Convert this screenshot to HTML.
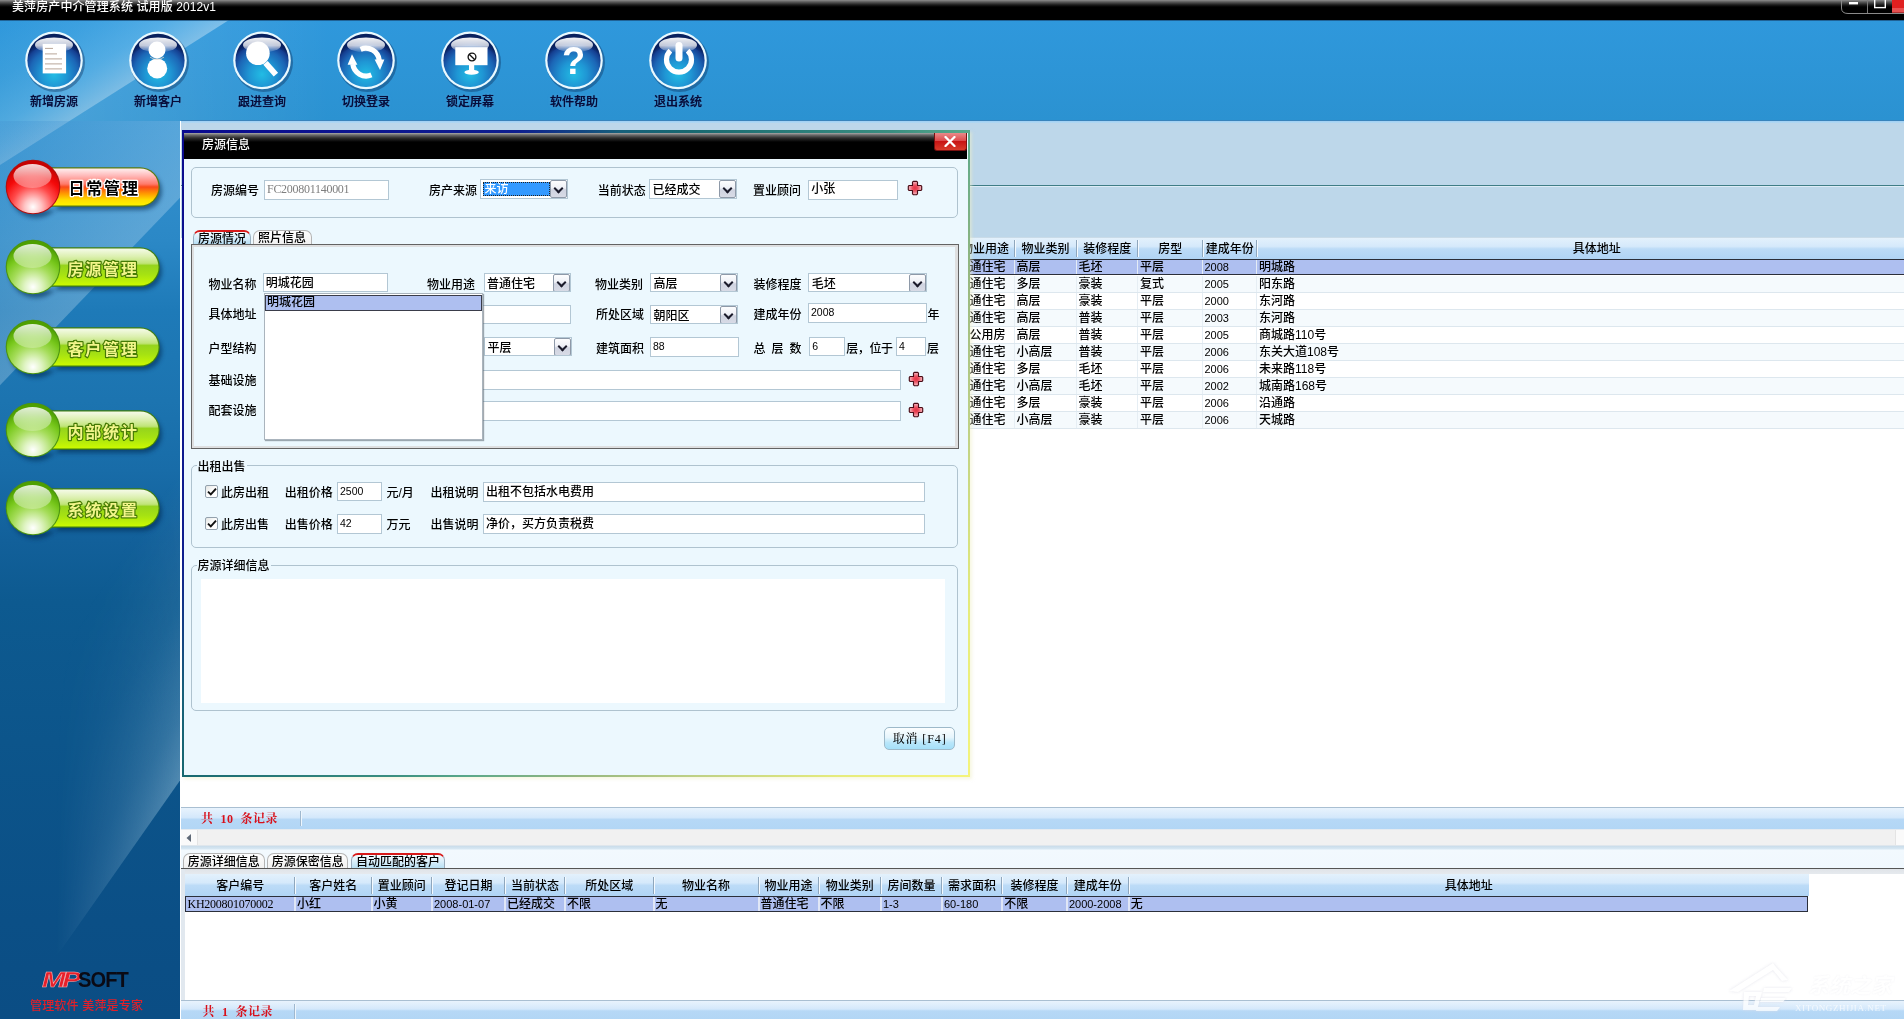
<!DOCTYPE html>
<html lang="zh-CN">
<head>
<meta charset="utf-8">
<title>美萍房产中介管理系统</title>
<style>
*{box-sizing:border-box;margin:0;padding:0}
html,body{width:1904px;height:1019px;overflow:hidden;background:#fff}
body{will-change:transform;transform:translateZ(0);position:relative;font-family:"Liberation Sans","Noto Sans CJK SC",sans-serif;font-size:12px;line-height:14px;color:#000;font-weight:500}
.abs{position:absolute}
.t{position:absolute;white-space:nowrap;height:14px;line-height:14px}
.ser{font-family:"Liberation Serif","Noto Serif CJK SC",serif}
.mono{font-family:"Liberation Mono","Noto Sans CJK SC",monospace}
/* title bar */
#titlebar{position:absolute;left:0;top:0;width:1904px;height:20px;background:linear-gradient(#8e8e8e 0,#5a5a5a 2px,#1a1a1a 5px,#000 7px,#000 100%)}
#toolbar{position:absolute;left:0;top:20px;width:1904px;height:101px;background:#2d95d6}
#sidebar{overflow:hidden;position:absolute;left:0;top:121px;width:180.4px;height:898px;background:linear-gradient(#3593d2 0,#2b88c6 120px,#1e7ab8 190px,#1c74b0 280px,#186ca8 350px,#12609a 420px,#0d5a90 480px,#0c558b 620px,#0b4f86 800px,#0b4d84 100%)}
#main{position:absolute;left:181px;top:121px;width:1723px;height:898px;background:#fff}
.tbl{position:absolute;white-space:nowrap;color:#060c3a;font-weight:500;font-size:12px;line-height:14px;height:14px;width:104px;text-align:center;text-shadow:0 0 1px rgba(6,12,58,.85),0 0 3px rgba(130,205,255,.55)}
/* inputs */
.inp{position:absolute;background:#fff;border:1px solid #b3c7d4;height:20px;font-size:10.5px;line-height:14px;padding:1px 0 0 2px;white-space:nowrap;overflow:hidden}
.cmb{position:absolute;background:#fff;border:1px solid #b3c7d4;height:20px;font-size:12px;line-height:16px;padding:2px 0 0 2.5px;white-space:nowrap;overflow:hidden}
.cmb i{position:absolute;right:0;top:0;width:17px;height:18px;border:1px solid #8e99a8;border-radius:2px;background:linear-gradient(#fdfdfe 0,#eef0f6 45%,#cfd3e0 55%,#d8dbe6 100%)}
.cmb i:after{content:"";position:absolute;left:4px;top:4px;width:5px;height:5px;border-right:2px solid #1a1a2a;border-bottom:2px solid #1a1a2a;transform:rotate(45deg) scale(1,1)}
.grp{position:absolute;border:1px solid #afc3cf;border-radius:5px}
.leg{position:absolute;background:#ecf8fe;padding:0 1px;white-space:nowrap;height:14px;line-height:14px}
.hd{position:absolute;top:0;height:22px;line-height:22px;text-align:center;white-space:nowrap;overflow:hidden}
.sep{position:absolute;top:3px;width:2px;height:17px;border-left:1px solid #8fa7bd;border-right:1px solid #f4faff}
.cell{position:absolute;top:0;height:17px;line-height:16px;white-space:nowrap;overflow:hidden;padding-left:2px}
.num{font-size:11px}
</style>
</head>
<body>
<div id="titlebar">
<div class="t" style="left:12px;top:0px;color:#fff;font-size:12px;letter-spacing:0.1px">美萍房产中介管理系统 试用版 2012v1</div>
<svg class="abs" style="left:1836px;top:0" width="68" height="20" viewBox="0 0 68 20">
<path d="M5.5 0V8Q5.5 13.5 12 13.5H68" fill="none" stroke="#8a8a8a" stroke-width="1"/>
<path d="M31.5 0V13" stroke="#7a7a7a" stroke-width="1"/>
<rect x="13" y="2" width="9" height="2.4" fill="#fff"/>
<rect x="38.7" y="-2" width="10.6" height="9.6" fill="none" stroke="#fff" stroke-width="1.4"/>
<rect x="56" y="0" width="12" height="12.5" fill="#e02020"/>
<rect x="56" y="8" width="12" height="4.5" fill="#e85050"/>
</svg>
</div>
<div id="toolbar">
<svg class="abs" style="left:0;top:0" width="1904" height="101" viewBox="0 20 1904 101">
<defs>
<linearGradient id="swA" gradientUnits="userSpaceOnUse" x1="150" y1="70" x2="60" y2="-70">
<stop offset="0" stop-color="#fff" stop-opacity=".38"/><stop offset=".2" stop-color="#a8e0ff" stop-opacity=".3"/><stop offset=".45" stop-color="#9cdcff" stop-opacity=".13"/><stop offset=".7" stop-color="#9cdcff" stop-opacity=".02"/><stop offset="1" stop-color="#9cdcff" stop-opacity="0"/>
</linearGradient>
<linearGradient id="tbh" gradientUnits="userSpaceOnUse" x1="0" y1="0" x2="330" y2="0"><stop offset="0" stop-color="#fff" stop-opacity=".17"/><stop offset="1" stop-color="#fff" stop-opacity="0"/></linearGradient>
<linearGradient id="tbv" x1="0" y1="0" x2="0" y2="1"><stop offset="0" stop-color="#2f98dc"/><stop offset="1" stop-color="#2b92d1"/></linearGradient>
<radialGradient id="ball" gradientUnits="userSpaceOnUse" cx="0" cy="14" r="34">
<stop offset="0" stop-color="#22bce4"/><stop offset=".38" stop-color="#1f96d4"/><stop offset=".72" stop-color="#1c66b6"/><stop offset=".9" stop-color="#154092"/><stop offset="1" stop-color="#08205e"/>
</radialGradient>
<linearGradient id="gloss" x1="0" y1="0" x2="0" y2="1"><stop offset="0" stop-color="#fff" stop-opacity=".95"/><stop offset=".55" stop-color="#fff" stop-opacity=".75"/><stop offset="1" stop-color="#fff" stop-opacity=".05"/></linearGradient>
<g id="sphere">
<circle cx="1.5" cy="2" r="29.5" fill="#06204a" opacity=".35"/>
<circle cx="0" cy="0" r="28.8" fill="#e9f9ff"/>
<circle cx="0" cy="0" r="26.6" fill="url(#ball)"/>
<path d="M-21 -10 A24 24 0 0 1 21 -10 Q0 -22 -21 -10Z" fill="#061a5c" opacity=".3"/>
<ellipse cx="0" cy="-15.5" rx="19" ry="7.5" fill="url(#gloss)"/>
</g>
</defs>
<rect x="0" y="20" width="1904" height="101" fill="url(#tbv)"/>
<polygon points="229,20 330,20 330,121 69.5,121" fill="url(#tbh)"/>
<polygon points="0,20 229,20 69.5,121 0,121" fill="url(#swA)"/>
<rect x="0" y="20" width="1904" height="1" fill="#1a4c78" opacity=".7"/>
<rect x="181" y="120" width="1723" height="1" fill="#3f7fb4" opacity=".75"/>
<!-- icon 1: document -->
<g transform="translate(54,60.4)"><use href="#sphere"/>
<rect x="-11.3" y="-16.5" width="23.4" height="29.5" fill="#fff"/>
<path d="M-9 -12h8M-9 -6.5h12M-9 -1.5h17M-9 3.5h17M-9 8.5h17" stroke="#b9a79a" stroke-width="1"/>
</g>
<!-- icon 2: person -->
<g transform="translate(158,60.4)"><use href="#sphere"/>
<circle cx="-1" cy="-10.4" r="8.5" fill="#fff"/><circle cx="-0.8" cy="8" r="10" fill="#fff"/>
<path d="M-8 -3.2Q-1 1.2 6 -3.2" fill="none" stroke="#d8cfc8" stroke-width=".8"/>
</g>
<!-- icon 3: magnifier -->
<g transform="translate(262,60.4)"><use href="#sphere"/>
<path d="M3.5 2.4L13.9 14.2" stroke="#fff" stroke-width="5.8"/>
<circle cx="-4.1" cy="-7.1" r="11.8" fill="#fff"/>
</g>
<!-- icon 4: refresh -->
<g transform="translate(366,60.4)"><use href="#sphere"/><g transform="translate(0,1.3)">
<path d="M-5.4 -12.4A13.5 13.5 0 0 1 13.2 -1.5" fill="none" stroke="#fff" stroke-width="5.2"/>
<path d="M8.6 -2.2L18.4 -2.2L14 8.2Z" fill="#fff"/>
<path d="M5.4 13.2A13.5 13.5 0 0 1 -13.2 2.5" fill="none" stroke="#fff" stroke-width="5.2"/>
<path d="M-8.6 3L-18.4 3L-14 -7.4Z" fill="#fff"/>
</g></g>
<!-- icon 5: monitor -->
<g transform="translate(470,60.4)"><use href="#sphere"/>
<rect x="-14.7" y="-13.2" width="32.2" height="18" fill="#fff"/>
<rect x="-1" y="4" width="5.2" height="7" fill="#fff"/>
<ellipse cx="1.6" cy="11.8" rx="7.2" ry="2.5" fill="#fff"/>
<circle cx="2" cy="-3.4" r="3.9" fill="none" stroke="#111" stroke-width="1.3"/>
<path d="M-0.8 -6.2L4.8 -0.6" stroke="#111" stroke-width="1.3"/>
</g>
<!-- icon 6: help -->
<g transform="translate(574,60.4)"><use href="#sphere"/>
<text x="-0.5" y="13.6" text-anchor="middle" font-family="Liberation Sans, sans-serif" font-weight="bold" font-size="38" fill="#fff">?</text>
</g>
<!-- icon 7: power -->
<g transform="translate(678,60.4)"><use href="#sphere"/>
<path d="M-7.6 -9.8A12.5 12.5 0 1 0 9.6 -9.8" fill="none" stroke="#fff" stroke-width="5.2"/>
<path d="M1 -15V-2.5" stroke="#fff" stroke-width="7" stroke-linecap="round"/>
</g>
</svg>
<div class="tbl" style="left:2px;top:75px">新增房源</div>
<div class="tbl" style="left:106px;top:75px">新增客户</div>
<div class="tbl" style="left:210px;top:75px">跟进查询</div>
<div class="tbl" style="left:314px;top:75px">切换登录</div>
<div class="tbl" style="left:418px;top:75px">锁定屏幕</div>
<div class="tbl" style="left:522px;top:75px">软件帮助</div>
<div class="tbl" style="left:626px;top:75px">退出系统</div>
</div>
<div id="sidebar">
<svg class="abs" style="left:0;top:0" width="181" height="898" viewBox="0 121 181 898">
<defs>
<linearGradient id="sdB" gradientUnits="userSpaceOnUse" x1="95" y1="286" x2="-28" y2="169"><stop offset="0" stop-color="#e4f4ff" stop-opacity=".26"/><stop offset="1" stop-color="#e4f4ff" stop-opacity=".05"/></linearGradient>
<linearGradient id="sdA" gradientUnits="userSpaceOnUse" x1="150" y1="70" x2="60" y2="-70"><stop offset="0" stop-color="#fff" stop-opacity=".2"/><stop offset=".2" stop-color="#a8e0ff" stop-opacity=".14"/><stop offset=".45" stop-color="#9cdcff" stop-opacity=".07"/><stop offset=".7" stop-color="#9cdcff" stop-opacity=".02"/><stop offset="1" stop-color="#9cdcff" stop-opacity="0"/></linearGradient>
<linearGradient id="sdC" gradientUnits="userSpaceOnUse" x1="181" y1="779" x2="34" y2="676"><stop offset="0" stop-color="#d8f4ff" stop-opacity=".34"/><stop offset=".2" stop-color="#d8f4ff" stop-opacity=".22"/><stop offset=".55" stop-color="#d8f4ff" stop-opacity=".09"/><stop offset="1" stop-color="#d8f4ff" stop-opacity="0"/></linearGradient>
<linearGradient id="sdCm" gradientUnits="userSpaceOnUse" x1="181" y1="0" x2="55" y2="0"><stop offset="0" stop-color="#fff"/><stop offset=".5" stop-color="#777"/><stop offset="1" stop-color="#000"/></linearGradient>
<mask id="mC" maskUnits="userSpaceOnUse" x="0" y="121" width="181" height="898"><rect x="0" y="121" width="181" height="898" fill="url(#sdCm)"/></mask>
<linearGradient id="pillR" x1="0" y1="0" x2="0" y2="1"><stop offset="0" stop-color="#fff0f0"/><stop offset=".2" stop-color="#ffb8b8"/><stop offset=".42" stop-color="#ff7a6a"/><stop offset=".5" stop-color="#fa4a1a"/><stop offset=".68" stop-color="#ff9a00"/><stop offset=".85" stop-color="#ffdf00"/><stop offset="1" stop-color="#fff200"/></linearGradient>
<linearGradient id="pillG" x1="0" y1="0" x2="0" y2="1"><stop offset="0" stop-color="#f6fbea"/><stop offset=".22" stop-color="#dcf0b0"/><stop offset=".4" stop-color="#c0e478"/><stop offset=".46" stop-color="#96d41c"/><stop offset=".7" stop-color="#a6e212"/><stop offset="1" stop-color="#ccfa00"/></linearGradient>
<radialGradient id="ballR" gradientUnits="userSpaceOnUse" cx="0" cy="20" r="42"><stop offset="0" stop-color="#fff"/><stop offset=".2" stop-color="#ffc4c4"/><stop offset=".5" stop-color="#ff4a4a"/><stop offset=".75" stop-color="#f40a0a"/><stop offset="1" stop-color="#c80000"/></radialGradient>
<radialGradient id="ballG" gradientUnits="userSpaceOnUse" cx="0" cy="20" r="42"><stop offset="0" stop-color="#fff"/><stop offset=".2" stop-color="#e0f4c4"/><stop offset=".5" stop-color="#a4dc58"/><stop offset=".75" stop-color="#78c81c"/><stop offset="1" stop-color="#4ea000"/></radialGradient>
<linearGradient id="bgloss" x1="0" y1="0" x2="0" y2="1"><stop offset="0" stop-color="#fff" stop-opacity=".85"/><stop offset="1" stop-color="#fff" stop-opacity=".25"/></linearGradient>
<filter id="bsh" x="-20%" y="-30%" width="150%" height="180%"><feGaussianBlur stdDeviation="2"/></filter>
<g id="btnG">
<path d="M0 -19H107A19 19 0 0 1 107 19H0Z M0 -27A27 27 0 1 0 0 27A27 27 0 1 0 0 -27Z" transform="translate(3,4)" fill="#052850" opacity=".55" filter="url(#bsh)"/>
<path d="M0 -19.8H107A19.8 19.8 0 0 1 107 19.8H0Z" fill="#3f7f10"/>
<path d="M0 -18.6H107A18.6 18.6 0 0 1 107 18.6H0Z" fill="url(#pillG)"/>
<circle r="27.3" fill="#4c9410"/><circle r="26.2" fill="url(#ballG)"/>
<ellipse cx="-0.5" cy="-11" rx="19" ry="12" fill="url(#bgloss)"/>
</g>
<g id="btnR">
<path d="M0 -19H107A19 19 0 0 1 107 19H0Z M0 -27A27 27 0 1 0 0 27A27 27 0 1 0 0 -27Z" transform="translate(3,4)" fill="#052850" opacity=".55" filter="url(#bsh)"/>
<path d="M0 -19.8H107A19.8 19.8 0 0 1 107 19.8H0Z" fill="#5a7a10"/>
<path d="M0 -18.6H107A18.6 18.6 0 0 1 107 18.6H0Z" fill="url(#pillR)"/>
<circle r="27.3" fill="#b01010"/><circle r="26.2" fill="url(#ballR)"/>
<ellipse cx="-0.5" cy="-11" rx="19" ry="12" fill="url(#bgloss)"/>
</g>
</defs>
<polygon points="0,121 181,121 181,196.7 0,385.3" fill="url(#sdB)"/>
<polygon points="0,121 69.5,121 0,165" fill="url(#sdA)"/>
<polygon points="181,480 181,779 40,980 0,980 0,480" fill="url(#sdC)" mask="url(#mC)"/>
<use href="#btnR" x="33" y="187"/>
<use href="#btnG" x="33" y="267"/>
<use href="#btnG" x="33" y="347"/>
<use href="#btnG" x="33" y="430"/>
<use href="#btnG" x="33" y="508"/>
<g font-family="Liberation Sans, Noto Sans CJK SC, sans-serif" font-weight="bold" font-size="16" letter-spacing="1.8" stroke-linejoin="round" paint-order="stroke">
<text x="68.5" y="194" fill="#000" stroke="#fff" stroke-width="2.6">日常管理</text>
<text x="67.5" y="274.5" fill="#f2f58a" stroke="#457a04" stroke-width="2.4">房源管理</text>
<text x="67.5" y="354.5" fill="#f2f58a" stroke="#457a04" stroke-width="2.4">客户管理</text>
<text x="67.5" y="437.5" fill="#f2f58a" stroke="#457a04" stroke-width="2.4">内部统计</text>
<text x="67.5" y="515.5" fill="#f2f58a" stroke="#457a04" stroke-width="2.4">系统设置</text>
</g>
<!-- logo -->
<g font-family="Liberation Sans, sans-serif">
<text x="42" y="987" font-size="22" font-weight="bold" font-style="italic" fill="#e8202a" stroke="#ffb0b0" stroke-width=".5" letter-spacing="-2.5" textLength="36" lengthAdjust="spacingAndGlyphs">MP</text>
<text x="78" y="987" font-size="22" font-weight="bold" fill="#0a0a14" letter-spacing="-1" textLength="50" lengthAdjust="spacingAndGlyphs">SOFT</text>
</g>
<text x="30" y="1010" font-family="Liberation Sans, Noto Sans CJK SC, sans-serif" font-size="12" fill="#e0202a" textLength="113">管理软件 美萍是专家</text>
</svg>
</div>
<div id="main">
<div class="abs" style="left:0;top:0;width:1723px;height:117px;background:#bdd7ea"></div>
<div class="abs" style="left:0;top:0;width:1723px;height:2px;background:linear-gradient(#9fd0f4,#b4d8f2)"></div>
<div class="abs" style="left:0;top:64px;width:1723px;height:1px;background:#3f7d86"></div>
<div class="abs" style="left:0;top:65px;width:1723px;height:1px;background:#dcecf6"></div>
<div class="abs" style="left:774px;top:116px;width:949px;height:22px;background:linear-gradient(#e3f1fc 0,#d5e9fb 40%,#bcdbf7 52%,#b0d4f5 100%);border-top:1px solid #c9dbe8;overflow:hidden">
<div class="hd" style="left:1.0px;width:58.0px;top:0px">物业用途</div>
<div class="hd" style="left:60.0px;width:61.0px;top:0px">物业类别</div>
<div class="hd" style="left:122.0px;width:60.5px;top:0px">装修程度</div>
<div class="hd" style="left:183.5px;width:63.5px;top:0px">房型</div>
<div class="hd" style="left:248.0px;width:53.5px;top:0px">建成年份</div>
<div class="hd" style="left:302.5px;width:678.5px;top:0px">具体地址</div>
<div class="sep" style="left:58.5px;top:2px"></div>
<div class="sep" style="left:120.5px;top:2px"></div>
<div class="sep" style="left:182.0px;top:2px"></div>
<div class="sep" style="left:246.5px;top:2px"></div>
<div class="sep" style="left:301.0px;top:2px"></div>
</div>
<div class="abs" style="left:774px;top:137.50px;width:949px;background:#aebff0;border-top:1px solid #2b2f3a;border-bottom:1px solid #2b2f3a;height:16.5px;overflow:hidden">
<div class="cell" style="left:0.5px;width:58.0px;top:-1px">普通住宅</div>
<div class="cell" style="left:59.5px;width:61.0px;top:-1px">高层</div>
<div class="cell" style="left:121.5px;width:60.5px;top:-1px">毛坯</div>
<div class="cell" style="left:183.0px;width:63.5px;top:-1px">平层</div>
<div class="cell num" style="left:247.5px;width:53.5px;top:-1px">2008</div>
<div class="cell" style="left:302.0px;width:678.5px;top:-1px">明城路</div>
<div class="abs" style="left:58.5px;top:0;width:1px;height:17px;background:#e4ecf6"></div>
<div class="abs" style="left:120.5px;top:0;width:1px;height:17px;background:#e4ecf6"></div>
<div class="abs" style="left:182.0px;top:0;width:1px;height:17px;background:#e4ecf6"></div>
<div class="abs" style="left:246.5px;top:0;width:1px;height:17px;background:#e4ecf6"></div>
<div class="abs" style="left:301.0px;top:0;width:1px;height:17px;background:#e4ecf6"></div>
</div>
<div class="abs" style="left:774px;top:154.55px;width:949px;background:#f5fafd;border-bottom:1px solid #dde7ee;height:17.05px;overflow:hidden">
<div class="cell" style="left:0.5px;width:58.0px;top:0">普通住宅</div>
<div class="cell" style="left:59.5px;width:61.0px;top:0">多层</div>
<div class="cell" style="left:121.5px;width:60.5px;top:0">豪装</div>
<div class="cell" style="left:183.0px;width:63.5px;top:0">复式</div>
<div class="cell num" style="left:247.5px;width:53.5px;top:0">2005</div>
<div class="cell" style="left:302.0px;width:678.5px;top:0">阳东路</div>
<div class="abs" style="left:58.5px;top:0;width:1px;height:17px;background:#e6eef4"></div>
<div class="abs" style="left:120.5px;top:0;width:1px;height:17px;background:#e6eef4"></div>
<div class="abs" style="left:182.0px;top:0;width:1px;height:17px;background:#e6eef4"></div>
<div class="abs" style="left:246.5px;top:0;width:1px;height:17px;background:#e6eef4"></div>
<div class="abs" style="left:301.0px;top:0;width:1px;height:17px;background:#e6eef4"></div>
</div>
<div class="abs" style="left:774px;top:171.60px;width:949px;background:#ffffff;border-bottom:1px solid #dde7ee;height:17.05px;overflow:hidden">
<div class="cell" style="left:0.5px;width:58.0px;top:0">普通住宅</div>
<div class="cell" style="left:59.5px;width:61.0px;top:0">高层</div>
<div class="cell" style="left:121.5px;width:60.5px;top:0">豪装</div>
<div class="cell" style="left:183.0px;width:63.5px;top:0">平层</div>
<div class="cell num" style="left:247.5px;width:53.5px;top:0">2000</div>
<div class="cell" style="left:302.0px;width:678.5px;top:0">东河路</div>
<div class="abs" style="left:58.5px;top:0;width:1px;height:17px;background:#e6eef4"></div>
<div class="abs" style="left:120.5px;top:0;width:1px;height:17px;background:#e6eef4"></div>
<div class="abs" style="left:182.0px;top:0;width:1px;height:17px;background:#e6eef4"></div>
<div class="abs" style="left:246.5px;top:0;width:1px;height:17px;background:#e6eef4"></div>
<div class="abs" style="left:301.0px;top:0;width:1px;height:17px;background:#e6eef4"></div>
</div>
<div class="abs" style="left:774px;top:188.65px;width:949px;background:#f5fafd;border-bottom:1px solid #dde7ee;height:17.05px;overflow:hidden">
<div class="cell" style="left:0.5px;width:58.0px;top:0">普通住宅</div>
<div class="cell" style="left:59.5px;width:61.0px;top:0">高层</div>
<div class="cell" style="left:121.5px;width:60.5px;top:0">普装</div>
<div class="cell" style="left:183.0px;width:63.5px;top:0">平层</div>
<div class="cell num" style="left:247.5px;width:53.5px;top:0">2003</div>
<div class="cell" style="left:302.0px;width:678.5px;top:0">东河路</div>
<div class="abs" style="left:58.5px;top:0;width:1px;height:17px;background:#e6eef4"></div>
<div class="abs" style="left:120.5px;top:0;width:1px;height:17px;background:#e6eef4"></div>
<div class="abs" style="left:182.0px;top:0;width:1px;height:17px;background:#e6eef4"></div>
<div class="abs" style="left:246.5px;top:0;width:1px;height:17px;background:#e6eef4"></div>
<div class="abs" style="left:301.0px;top:0;width:1px;height:17px;background:#e6eef4"></div>
</div>
<div class="abs" style="left:774px;top:205.70px;width:949px;background:#ffffff;border-bottom:1px solid #dde7ee;height:17.05px;overflow:hidden">
<div class="cell" style="left:0.5px;width:58.0px;top:0">办公用房</div>
<div class="cell" style="left:59.5px;width:61.0px;top:0">高层</div>
<div class="cell" style="left:121.5px;width:60.5px;top:0">普装</div>
<div class="cell" style="left:183.0px;width:63.5px;top:0">平层</div>
<div class="cell num" style="left:247.5px;width:53.5px;top:0">2005</div>
<div class="cell" style="left:302.0px;width:678.5px;top:0">商城路110号</div>
<div class="abs" style="left:58.5px;top:0;width:1px;height:17px;background:#e6eef4"></div>
<div class="abs" style="left:120.5px;top:0;width:1px;height:17px;background:#e6eef4"></div>
<div class="abs" style="left:182.0px;top:0;width:1px;height:17px;background:#e6eef4"></div>
<div class="abs" style="left:246.5px;top:0;width:1px;height:17px;background:#e6eef4"></div>
<div class="abs" style="left:301.0px;top:0;width:1px;height:17px;background:#e6eef4"></div>
</div>
<div class="abs" style="left:774px;top:222.75px;width:949px;background:#f5fafd;border-bottom:1px solid #dde7ee;height:17.05px;overflow:hidden">
<div class="cell" style="left:0.5px;width:58.0px;top:0">普通住宅</div>
<div class="cell" style="left:59.5px;width:61.0px;top:0">小高层</div>
<div class="cell" style="left:121.5px;width:60.5px;top:0">普装</div>
<div class="cell" style="left:183.0px;width:63.5px;top:0">平层</div>
<div class="cell num" style="left:247.5px;width:53.5px;top:0">2006</div>
<div class="cell" style="left:302.0px;width:678.5px;top:0">东关大道108号</div>
<div class="abs" style="left:58.5px;top:0;width:1px;height:17px;background:#e6eef4"></div>
<div class="abs" style="left:120.5px;top:0;width:1px;height:17px;background:#e6eef4"></div>
<div class="abs" style="left:182.0px;top:0;width:1px;height:17px;background:#e6eef4"></div>
<div class="abs" style="left:246.5px;top:0;width:1px;height:17px;background:#e6eef4"></div>
<div class="abs" style="left:301.0px;top:0;width:1px;height:17px;background:#e6eef4"></div>
</div>
<div class="abs" style="left:774px;top:239.80px;width:949px;background:#ffffff;border-bottom:1px solid #dde7ee;height:17.05px;overflow:hidden">
<div class="cell" style="left:0.5px;width:58.0px;top:0">普通住宅</div>
<div class="cell" style="left:59.5px;width:61.0px;top:0">多层</div>
<div class="cell" style="left:121.5px;width:60.5px;top:0">毛坯</div>
<div class="cell" style="left:183.0px;width:63.5px;top:0">平层</div>
<div class="cell num" style="left:247.5px;width:53.5px;top:0">2006</div>
<div class="cell" style="left:302.0px;width:678.5px;top:0">未来路118号</div>
<div class="abs" style="left:58.5px;top:0;width:1px;height:17px;background:#e6eef4"></div>
<div class="abs" style="left:120.5px;top:0;width:1px;height:17px;background:#e6eef4"></div>
<div class="abs" style="left:182.0px;top:0;width:1px;height:17px;background:#e6eef4"></div>
<div class="abs" style="left:246.5px;top:0;width:1px;height:17px;background:#e6eef4"></div>
<div class="abs" style="left:301.0px;top:0;width:1px;height:17px;background:#e6eef4"></div>
</div>
<div class="abs" style="left:774px;top:256.85px;width:949px;background:#f5fafd;border-bottom:1px solid #dde7ee;height:17.05px;overflow:hidden">
<div class="cell" style="left:0.5px;width:58.0px;top:0">普通住宅</div>
<div class="cell" style="left:59.5px;width:61.0px;top:0">小高层</div>
<div class="cell" style="left:121.5px;width:60.5px;top:0">毛坯</div>
<div class="cell" style="left:183.0px;width:63.5px;top:0">平层</div>
<div class="cell num" style="left:247.5px;width:53.5px;top:0">2002</div>
<div class="cell" style="left:302.0px;width:678.5px;top:0">城南路168号</div>
<div class="abs" style="left:58.5px;top:0;width:1px;height:17px;background:#e6eef4"></div>
<div class="abs" style="left:120.5px;top:0;width:1px;height:17px;background:#e6eef4"></div>
<div class="abs" style="left:182.0px;top:0;width:1px;height:17px;background:#e6eef4"></div>
<div class="abs" style="left:246.5px;top:0;width:1px;height:17px;background:#e6eef4"></div>
<div class="abs" style="left:301.0px;top:0;width:1px;height:17px;background:#e6eef4"></div>
</div>
<div class="abs" style="left:774px;top:273.90px;width:949px;background:#ffffff;border-bottom:1px solid #dde7ee;height:17.05px;overflow:hidden">
<div class="cell" style="left:0.5px;width:58.0px;top:0">普通住宅</div>
<div class="cell" style="left:59.5px;width:61.0px;top:0">多层</div>
<div class="cell" style="left:121.5px;width:60.5px;top:0">豪装</div>
<div class="cell" style="left:183.0px;width:63.5px;top:0">平层</div>
<div class="cell num" style="left:247.5px;width:53.5px;top:0">2006</div>
<div class="cell" style="left:302.0px;width:678.5px;top:0">沿通路</div>
<div class="abs" style="left:58.5px;top:0;width:1px;height:17px;background:#e6eef4"></div>
<div class="abs" style="left:120.5px;top:0;width:1px;height:17px;background:#e6eef4"></div>
<div class="abs" style="left:182.0px;top:0;width:1px;height:17px;background:#e6eef4"></div>
<div class="abs" style="left:246.5px;top:0;width:1px;height:17px;background:#e6eef4"></div>
<div class="abs" style="left:301.0px;top:0;width:1px;height:17px;background:#e6eef4"></div>
</div>
<div class="abs" style="left:774px;top:290.95px;width:949px;background:#f5fafd;border-bottom:1px solid #dde7ee;height:17.05px;overflow:hidden">
<div class="cell" style="left:0.5px;width:58.0px;top:0">普通住宅</div>
<div class="cell" style="left:59.5px;width:61.0px;top:0">小高层</div>
<div class="cell" style="left:121.5px;width:60.5px;top:0">豪装</div>
<div class="cell" style="left:183.0px;width:63.5px;top:0">平层</div>
<div class="cell num" style="left:247.5px;width:53.5px;top:0">2006</div>
<div class="cell" style="left:302.0px;width:678.5px;top:0">天城路</div>
<div class="abs" style="left:58.5px;top:0;width:1px;height:17px;background:#e6eef4"></div>
<div class="abs" style="left:120.5px;top:0;width:1px;height:17px;background:#e6eef4"></div>
<div class="abs" style="left:182.0px;top:0;width:1px;height:17px;background:#e6eef4"></div>
<div class="abs" style="left:246.5px;top:0;width:1px;height:17px;background:#e6eef4"></div>
<div class="abs" style="left:301.0px;top:0;width:1px;height:17px;background:#e6eef4"></div>
</div>
<div class="abs" style="left:0;top:686px;width:1723px;height:22px;border-top:1px solid #a9bfd2;background:linear-gradient(#e8f3fd 0,#d4e8fb 45%,#b6d8f6 55%,#b2d6f5 100%)">
<div class="t ser" style="left:20px;top:4px;color:#d8101a;font-weight:bold;font-size:12px;word-spacing:3.5px;letter-spacing:.5px">共 10 条记录</div>
<div class="abs" style="left:119px;top:3px;width:2px;height:15px;border-left:1px solid #9fb8cf;border-right:1px solid #eef6fd"></div>
</div>
<div class="abs" style="left:0;top:708px;width:1723px;height:17px;background:#f1f1f1;border-top:1px solid #e4eaf0;border-bottom:1px solid #dfe6ec">
<div class="abs" style="left:0;top:0;width:17px;height:15px;background:#fafafa;border-right:1px solid #e4e4e4"></div>
<svg class="abs" style="left:4px;top:3px" width="8" height="10" viewBox="0 0 8 10"><path d="M6 1L1.5 5L6 9Z" fill="#606a78"/></svg>
<div class="abs" style="left:1714px;top:0;width:9px;height:15px;background:#fafafa;border-left:1px solid #e4e4e4"></div>
</div>
<div class="abs" style="left:0;top:725px;width:1723px;height:22px;background:linear-gradient(#c9dcea 0,#d8e8f3 3px,#f2f9fe 4px,#f0f8fe 100%)"></div>
<div class="abs" style="left:2.0px;top:732.0px;width:81.5px;height:15px;background:linear-gradient(#fdfdfd 0,#f1f1f1 100%);border:1px solid #b4b4b4;border-bottom:none;border-radius:7px 7px 0 0;overflow:hidden;text-align:center;white-space:nowrap;line-height:15px"><span style="position:relative;top:1px">房源详细信息</span></div>
<div class="abs" style="left:86.0px;top:732.0px;width:81.3px;height:15px;background:linear-gradient(#fdfdfd 0,#f1f1f1 100%);border:1px solid #b4b4b4;border-bottom:none;border-radius:7px 7px 0 0;overflow:hidden;text-align:center;white-space:nowrap;line-height:15px"><span style="position:relative;top:1px">房源保密信息</span></div>
<div class="abs" style="left:169.7px;top:732.0px;width:94.5px;height:15px;background:linear-gradient(#f7fcff 0,#d9eefa 50%,#b9e0f4 100%);border:1px solid #9ab;border-bottom:none;border-top:2px solid #d81a1a;border-radius:7px 7px 0 0;overflow:hidden;text-align:center;white-space:nowrap;line-height:15px"><span style="position:relative;top:0px">自动匹配的客户</span></div>
<div class="abs" style="left:0;top:747px;width:1723px;height:132px;background:#fff;border-top:1px solid #555"></div>
<div class="abs" style="left:0;top:748px;width:1723px;height:5px;background:linear-gradient(#dfe3e8,#e6eaee)"></div>
<div class="abs" style="left:0;top:748px;width:4px;height:131px;background:#e1e8ef"></div>
<div class="abs" style="left:4px;top:753px;width:1623.5px;height:22px;background:linear-gradient(#e3f1fc 0,#d5e9fb 40%,#bcdbf7 52%,#b0d4f5 100%);overflow:hidden">
<div class="hd" style="left:1.0px;width:108.5px;top:1px">客户编号</div>
<div class="hd" style="left:110.5px;width:75.5px;top:1px">客户姓名</div>
<div class="hd" style="left:187.0px;width:59.5px;top:1px">置业顾问</div>
<div class="hd" style="left:247.5px;width:72.0px;top:1px">登记日期</div>
<div class="hd" style="left:320.5px;width:59.0px;top:1px">当前状态</div>
<div class="hd" style="left:380.5px;width:87.5px;top:1px">所处区域</div>
<div class="hd" style="left:469.0px;width:104.0px;top:1px">物业名称</div>
<div class="hd" style="left:574.0px;width:59.0px;top:1px">物业用途</div>
<div class="hd" style="left:634.0px;width:61.5px;top:1px">物业类别</div>
<div class="hd" style="left:696.5px;width:60.0px;top:1px">房间数量</div>
<div class="hd" style="left:757.5px;width:59.2px;top:1px">需求面积</div>
<div class="hd" style="left:817.7px;width:63.7px;top:1px">装修程度</div>
<div class="hd" style="left:882.4px;width:60.8px;top:1px">建成年份</div>
<div class="hd" style="left:944.2px;width:679.3px;top:1px">具体地址</div>
<div class="sep" style="left:109.0px;top:3px"></div>
<div class="sep" style="left:185.5px;top:3px"></div>
<div class="sep" style="left:246.0px;top:3px"></div>
<div class="sep" style="left:319.0px;top:3px"></div>
<div class="sep" style="left:379.0px;top:3px"></div>
<div class="sep" style="left:467.5px;top:3px"></div>
<div class="sep" style="left:572.5px;top:3px"></div>
<div class="sep" style="left:632.5px;top:3px"></div>
<div class="sep" style="left:695.0px;top:3px"></div>
<div class="sep" style="left:756.0px;top:3px"></div>
<div class="sep" style="left:816.2px;top:3px"></div>
<div class="sep" style="left:880.9px;top:3px"></div>
<div class="sep" style="left:942.7px;top:3px"></div>
</div>
<div class="abs" style="left:4px;top:775px;width:1623px;height:16px;background:#aebff0;border:1px solid #2b2f3a;overflow:hidden">
<div class="cell ser" style="left:-0.5px;width:108.5px;top:-1px;letter-spacing:-0.25px;">KH200801070002</div>
<div class="cell" style="left:109.0px;width:75.5px;top:-1px;">小红</div>
<div class="cell" style="left:185.5px;width:59.5px;top:-1px;">小黄</div>
<div class="cell num" style="left:246.0px;width:72.0px;top:-1px;">2008-01-07</div>
<div class="cell" style="left:319.0px;width:59.0px;top:-1px;">已经成交</div>
<div class="cell" style="left:379.0px;width:87.5px;top:-1px;">不限</div>
<div class="cell" style="left:467.5px;width:104.0px;top:-1px;">无</div>
<div class="cell" style="left:572.5px;width:59.0px;top:-1px;">普通住宅</div>
<div class="cell" style="left:632.5px;width:61.5px;top:-1px;">不限</div>
<div class="cell num" style="left:695.0px;width:60.0px;top:-1px;">1-3</div>
<div class="cell num" style="left:756.0px;width:59.2px;top:-1px;">60-180</div>
<div class="cell" style="left:816.2px;width:63.7px;top:-1px;">不限</div>
<div class="cell num" style="left:880.9px;width:60.8px;top:-1px;">2000-2008</div>
<div class="cell" style="left:942.7px;width:679.3px;top:-1px;">无</div>
<div class="abs" style="left:108.0px;top:0;width:2px;height:16px;background:#dfe6f6"></div>
<div class="abs" style="left:184.5px;top:0;width:2px;height:16px;background:#dfe6f6"></div>
<div class="abs" style="left:245.0px;top:0;width:2px;height:16px;background:#dfe6f6"></div>
<div class="abs" style="left:318.0px;top:0;width:2px;height:16px;background:#dfe6f6"></div>
<div class="abs" style="left:378.0px;top:0;width:2px;height:16px;background:#dfe6f6"></div>
<div class="abs" style="left:466.5px;top:0;width:2px;height:16px;background:#dfe6f6"></div>
<div class="abs" style="left:571.5px;top:0;width:2px;height:16px;background:#dfe6f6"></div>
<div class="abs" style="left:631.5px;top:0;width:2px;height:16px;background:#dfe6f6"></div>
<div class="abs" style="left:694.0px;top:0;width:2px;height:16px;background:#dfe6f6"></div>
<div class="abs" style="left:755.0px;top:0;width:2px;height:16px;background:#dfe6f6"></div>
<div class="abs" style="left:815.2px;top:0;width:2px;height:16px;background:#dfe6f6"></div>
<div class="abs" style="left:879.9px;top:0;width:2px;height:16px;background:#dfe6f6"></div>
<div class="abs" style="left:941.7px;top:0;width:2px;height:16px;background:#dfe6f6"></div>
</div>
<div class="abs" style="left:0;top:879px;width:1723px;height:19px;border-top:1px solid #a9bfd2;background:linear-gradient(#e8f3fd 0,#d4e8fb 45%,#b6d8f6 55%,#b2d6f5 100%)">
<div class="t ser" style="left:21.5px;top:4px;color:#d8101a;font-weight:bold;font-size:12px;word-spacing:3.5px;letter-spacing:.5px">共 1 条记录</div>
<div class="abs" style="left:113px;top:3px;width:2px;height:15px;border-left:1px solid #9fb8cf;border-right:1px solid #eef6fd"></div>
</div>
<svg class="abs" style="left:1545px;top:837px;opacity:.75;filter:drop-shadow(0 0 1.5px #dcdce6)" width="80" height="56" viewBox="0 0 80 56"><path d="M3 33L47 5L50 9L62 22L56 23L47 12L12 34Z" fill="#fff"/><path d="M18 34H36L31 52H17Z M23 38L22 47H28L30 38Z" fill="#fff" fill-rule="evenodd"/><path d="M38 30H66L63 34H37Z M35 40H60L57 44H34Z M31 49H54L51 53H30Z" fill="#fff"/></svg>
<div class="t" style="left:1627px;top:854px;color:#fff;opacity:.6;font-weight:bold;font-style:italic;font-size:21px;height:22px;line-height:22px;text-shadow:0 0 2px #e8e8ee">系统之家</div>
<div class="t ser" style="left:1614px;top:880px;color:#fff;opacity:.7;font-size:9px;letter-spacing:.6px">XITONGZHIJIA.NET</div>
</div>
<div id="dlg" class="abs" style="left:182px;top:130px;width:787.6px;height:647px;background:linear-gradient(128deg,#0a0a8e 0%,#0e1e8e 26%,#17607a 34%,#186870 39%,#3a8e80 55%,#5aa88a 61%,#98b880 70%,#bccf86 78%,#e6ec7c 90%,#f4f47c 100%);box-shadow:2px 2px 3px rgba(240,240,200,.5)">
<div class="abs" style="left:2px;top:3px;width:783.6px;height:641.8px;background:#ecf8fe;overflow:hidden">
<svg width="0" height="0" style="position:absolute"><defs><radialGradient id="plg" gradientUnits="userSpaceOnUse" cx="0" cy="0" r="7"><stop offset="0" stop-color="#e63446"/><stop offset=".35" stop-color="#ea4a5a"/><stop offset=".8" stop-color="#f4a2ac"/><stop offset="1" stop-color="#f6b4bc"/></radialGradient></defs></svg>
<div class="abs" style="left:0;top:0;width:783px;height:25.5px;background:linear-gradient(#a8a8a8 0,#6a6a6a 2px,#2e2e2e 5px,#000 9px,#000 100%)"></div>
<div class="t" style="left:18px;top:5px;color:#fff">房源信息</div>
<div class="abs" style="left:749.5px;top:0;width:33px;height:18px;background:linear-gradient(#e98a8a 0,#dd4b4b 45%,#c81414 50%,#d83a2a 100%);border:1px solid #7a1010;border-top:none;border-radius:0 0 3px 3px"></div>
<svg class="abs" style="left:760px;top:2.5px" width="12" height="11" viewBox="0 0 12 11"><path d="M1.5 1L10.5 10M10.5 1L1.5 10" stroke="#fff" stroke-width="2.3" stroke-linecap="round"/></svg>
<div class="grp" style="left:7px;top:34px;width:767px;height:51px"></div>
<div class="t" style="left:27px;top:51px;">房源编号</div>
<div class="inp ser" style="left:80px;top:47px;width:125px;height:20px;color:#7e7e7e;font-size:12px;letter-spacing:-0.28px;padding-top:1px">FC200801140001</div>
<div class="t" style="left:245px;top:51px;">房产来源</div>
<div class="cmb" style="left:296.4px;top:46.2px;width:88.0px;height:19.8px;"><span style="position:absolute;left:2px;top:2px;width:67px;height:14px;background:#3399ff;outline:1px dotted #222;outline-offset:-1px;color:#fff;line-height:14px;padding-left:1px">来访</span><i></i></div>
<div class="t" style="left:413.7px;top:51px;">当前状态</div>
<div class="cmb" style="left:465px;top:46.2px;width:88.3px;height:19.8px;">已经成交<i></i></div>
<div class="t" style="left:569px;top:51px;">置业顾问</div>
<div class="inp" style="left:624.2px;top:47px;width:89.6px;height:19.6px;font-size:12px;padding-left:2px;padding-top:1px">小张</div>
<svg class="abs" style="left:723px;top:47px" width="16" height="16" viewBox="-8 -8 16 16"><path d="M-1.7 -6.7H1.7L2.5 -5.9V-2.5H5.9L6.7 -1.7V1.7L5.9 2.5H2.5V5.9L1.7 6.7H-1.7L-2.5 5.9V2.5H-5.9L-6.7 1.7V-1.7L-5.9 -2.5H-2.5V-5.9Z" fill="url(#plg)" stroke="#4a0c16" stroke-width="1.15" stroke-linejoin="round"/></svg>
<div class="abs" style="left:9px;top:96.6px;width:58px;height:15px;background:linear-gradient(#f4fbff 0,#cfe9f8 60%,#aedbf3 100%);border:1px solid #9ab0c0;border-bottom:none;border-top:2px solid #d81a1a;border-radius:7px 7px 0 0;overflow:hidden;text-align:center;white-space:nowrap;line-height:15px"><span style="position:relative;top:0px">房源情况</span></div>
<div class="abs" style="left:68.5px;top:97px;width:59px;height:15px;background:linear-gradient(#fdfdfd 0,#f0f0f0 100%);border:1px solid #b4b4b4;border-bottom:none;border-radius:7px 7px 0 0;overflow:hidden;text-align:center;white-space:nowrap;line-height:15px"><span style="position:relative;top:0px">照片信息</span></div>
<div class="abs" style="left:6.5px;top:111px;width:768.5px;height:205px;border:1px solid #636363;background:#ecf8fe"></div>
<div class="abs" style="left:7.5px;top:112px;width:766.5px;height:203px;border:2px solid #dedfe0;border-right-width:3px"></div>
<div class="t" style="left:24.6px;top:144.5px;">物业名称</div>
<div class="inp" style="left:79.3px;top:140.4px;width:124.7px;height:19.0px;font-size:12px;padding-left:1.5px;padding-top:2px">明城花园</div>
<div class="t" style="left:243px;top:144.5px;">物业用途</div>
<div class="cmb" style="left:299.5px;top:140.4px;width:87.7px;height:19.0px;">普通住宅<i></i></div>
<div class="t" style="left:411px;top:144.5px;">物业类别</div>
<div class="cmb" style="left:466px;top:140.4px;width:87.6px;height:19.0px;">高层<i></i></div>
<div class="t" style="left:569.6px;top:144.5px;">装修程度</div>
<div class="cmb" style="left:624.2px;top:140.4px;width:119.0px;height:19.0px;">毛坯<i></i></div>
<div class="t" style="left:24.6px;top:174.5px;">具体地址</div>
<div class="inp" style="left:80px;top:172.3px;width:307px;height:19.2px;"></div>
<div class="t" style="left:412px;top:175px;">所处区域</div>
<div class="cmb" style="left:466px;top:171.5px;width:87.8px;height:19.0px;">朝阳区<i></i></div>
<div class="t" style="left:569.6px;top:174.5px;">建成年份</div>
<div class="inp" style="left:624px;top:170.3px;width:118.7px;height:19.5px;">2008</div>
<div class="t" style="left:743.5px;top:174.5px;">年</div>
<div class="t" style="left:24.6px;top:208.5px;">户型结构</div>
<div class="cmb" style="left:300px;top:204.3px;width:88px;height:19.0px;">平层<i></i></div>
<div class="t" style="left:412px;top:208.5px;">建筑面积</div>
<div class="inp" style="left:466px;top:204.3px;width:88.6px;height:19.3px;">88</div>
<div class="t" style="left:569.6px;top:208.5px;word-spacing:2.6px">总 层 数</div>
<div class="inp" style="left:625.3px;top:204.4px;width:35.4px;height:19.1px;">6</div>
<div class="t" style="left:662.2px;top:208.5px;letter-spacing:-0.4px">层，位于</div>
<div class="inp" style="left:712.1px;top:204.4px;width:29.8px;height:19.1px;">4</div>
<div class="t" style="left:743px;top:208.5px;">层</div>
<div class="t" style="left:24.6px;top:240.5px;">基础设施</div>
<div class="inp" style="left:80px;top:237.4px;width:636.8px;height:19.3px;"></div>
<svg class="abs" style="left:724px;top:238px" width="16" height="16" viewBox="-8 -8 16 16"><path d="M-1.7 -6.7H1.7L2.5 -5.9V-2.5H5.9L6.7 -1.7V1.7L5.9 2.5H2.5V5.9L1.7 6.7H-1.7L-2.5 5.9V2.5H-5.9L-6.7 1.7V-1.7L-5.9 -2.5H-2.5V-5.9Z" fill="url(#plg)" stroke="#4a0c16" stroke-width="1.15" stroke-linejoin="round"/></svg>
<div class="t" style="left:24.6px;top:270.5px;">配套设施</div>
<div class="inp" style="left:80px;top:268px;width:636.8px;height:19.6px;"></div>
<svg class="abs" style="left:724px;top:269px" width="16" height="16" viewBox="-8 -8 16 16"><path d="M-1.7 -6.7H1.7L2.5 -5.9V-2.5H5.9L6.7 -1.7V1.7L5.9 2.5H2.5V5.9L1.7 6.7H-1.7L-2.5 5.9V2.5H-5.9L-6.7 1.7V-1.7L-5.9 -2.5H-2.5V-5.9Z" fill="url(#plg)" stroke="#4a0c16" stroke-width="1.15" stroke-linejoin="round"/></svg>
<div class="abs" style="left:79.8px;top:159.6px;width:219.6px;height:147.4px;background:#fff;border:1px solid #aab4bd;box-shadow:1px 1px 1px rgba(90,100,110,.55)"></div>
<div class="abs" style="left:81px;top:161.5px;width:217.3px;height:16.2px;background:#aebff0;border:1px solid #3a3d4a;line-height:14px;padding-left:1px;white-space:nowrap;overflow:hidden"><span style="position:relative;top:-1px">明城花园</span></div>
<div class="grp" style="left:7.3px;top:332.2px;width:766.6px;height:82.6px"></div>
<div class="leg" style="left:12.6px;top:327px">出租出售</div>
<div class="abs" style="left:21.3px;top:352.2px;width:13px;height:13px;background:linear-gradient(135deg,#e4e6e4,#fff 55%);border:1px solid #93a1ad;border-radius:2px"></div>
<svg class="abs" style="left:22.8px;top:354.2px" width="10" height="10" viewBox="0 0 10 10"><path d="M1 4.6L3.8 7.4L9 1.6" fill="none" stroke="#111" stroke-width="1.9"/></svg>
<div class="t" style="left:37px;top:352.5px;">此房出租</div>
<div class="t" style="left:100.8px;top:352.5px;">出租价格</div>
<div class="inp" style="left:153px;top:349.2px;width:44.8px;height:19.3px;">2500</div>
<div class="t" style="left:202.4px;top:353px;">元/月</div>
<div class="t" style="left:246.5px;top:352.5px;">出租说明</div>
<div class="inp" style="left:299.4px;top:349px;width:441.4px;height:19.5px;font-size:12px;padding-top:2px;padding-left:1.5px">出租不包括水电费用</div>
<div class="abs" style="left:21.3px;top:384.4px;width:13px;height:13px;background:linear-gradient(135deg,#e4e6e4,#fff 55%);border:1px solid #93a1ad;border-radius:2px"></div>
<svg class="abs" style="left:22.8px;top:386.4px" width="10" height="10" viewBox="0 0 10 10"><path d="M1 4.6L3.8 7.4L9 1.6" fill="none" stroke="#111" stroke-width="1.9"/></svg>
<div class="t" style="left:37px;top:384.5px;">此房出售</div>
<div class="t" style="left:100.8px;top:384.5px;">出售价格</div>
<div class="inp" style="left:153px;top:381px;width:44.8px;height:19.5px;">42</div>
<div class="t" style="left:202.4px;top:385px;">万元</div>
<div class="t" style="left:246.5px;top:384.5px;">出售说明</div>
<div class="inp" style="left:299.4px;top:381px;width:441.4px;height:19.5px;font-size:12px;padding-top:2px;padding-left:1.5px">净价，买方负责税费</div>
<div class="grp" style="left:7.3px;top:431.5px;width:766.6px;height:146px"></div>
<div class="leg" style="left:12.6px;top:426.3px">房源详细信息</div>
<div class="abs" style="left:17px;top:445.6px;width:743.8px;height:124.5px;background:#fff"></div>
<div class="abs ser" style="left:700px;top:594px;width:71.3px;height:22.6px;border:1px solid #9db9c9;border-radius:5px;background:linear-gradient(#fbfeff 0,#e6f5fc 45%,#b8e6fa 70%,#a5e0f9 100%);text-align:center;line-height:23px;white-space:nowrap;font-size:12px;letter-spacing:.9px">取消 [F4]</div>
</div></div>
</body></html>
